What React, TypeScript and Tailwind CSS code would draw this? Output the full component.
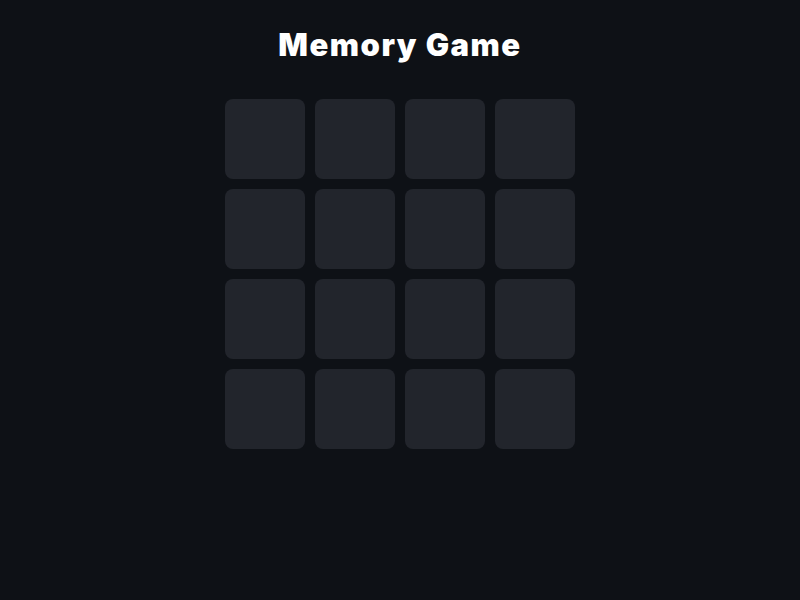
import React from "react";

const App: React.FC = () => {
  const cards = Array.from({ length: 16 }, (_, i) => i);

  return (
    <div className="min-h-screen w-full bg-[#0e1116] flex flex-col items-center pt-[26px]">
      <h1 className="text-[31px] leading-[38px] font-black text-white tracking-[1.5px] font-['Inter',sans-serif]">
        Memory Game
      </h1>
      <div className="mt-[35px] grid grid-cols-4 gap-[10px]">
        {cards.map((c) => (
          <div key={c} className="w-20 h-20 rounded-lg bg-[#22252c]" />
        ))}
      </div>
    </div>
  );
};

export default App;
